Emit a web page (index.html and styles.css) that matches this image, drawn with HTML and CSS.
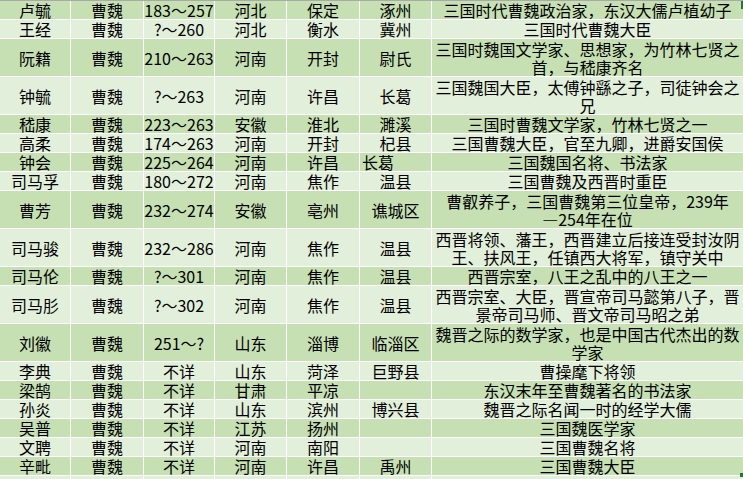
FILE: index.html
```html
<!DOCTYPE html>
<html lang="zh-CN">
<head>
<meta charset="utf-8">
<title>曹魏人物表</title>
<link rel="stylesheet" href="styles.css">
</head>
<body>
<div class="sheet">
  <div class="row dark s"><div>卢毓</div><div>曹魏</div><div>183～257</div><div>河北</div><div>保定</div><div>涿州</div><div>三国时代曹魏政治家，东汉大儒卢植幼子</div></div>
  <div class="row light s"><div>王经</div><div>曹魏</div><div>?～260</div><div>河北</div><div>衡水</div><div>冀州</div><div>三国时代曹魏大臣</div></div>
  <div class="row dark d"><div>阮籍</div><div>曹魏</div><div>210～263</div><div>河南</div><div>开封</div><div>尉氏</div><div>三国时魏国文学家、思想家，为竹林七贤之<br>首，与嵇康齐名</div></div>
  <div class="row light d"><div>钟毓</div><div>曹魏</div><div>?～263</div><div>河南</div><div>许昌</div><div>长葛</div><div>三国魏国大臣，太傅钟繇之子，司徒钟会之<br>兄</div></div>
  <div class="row dark s"><div>嵇康</div><div>曹魏</div><div>223～263</div><div>安徽</div><div>淮北</div><div>濉溪</div><div>三国时曹魏文学家，竹林七贤之一</div></div>
  <div class="row light s"><div>高柔</div><div>曹魏</div><div>174～263</div><div>河南</div><div>开封</div><div>杞县</div><div>三国曹魏大臣，官至九卿，进爵安国侯</div></div>
  <div class="row dark s"><div>钟会</div><div>曹魏</div><div>225～264</div><div>河南</div><div>许昌</div><div class="left">长葛</div><div>三国魏国名将、书法家</div></div>
  <div class="row light s"><div>司马孚</div><div>曹魏</div><div>180～272</div><div>河南</div><div>焦作</div><div>温县</div><div>三国曹魏及西晋时重臣</div></div>
  <div class="row dark d"><div>曹芳</div><div>曹魏</div><div>232～274</div><div>安徽</div><div>亳州</div><div>谯城区</div><div>曹叡养子，三国曹魏第三位皇帝，239年<br>—254年在位</div></div>
  <div class="row light d"><div>司马骏</div><div>曹魏</div><div>232～286</div><div>河南</div><div>焦作</div><div>温县</div><div>西晋将领、藩王，西晋建立后接连受封汝阴<br>王、扶风王，任镇西大将军，镇守关中</div></div>
  <div class="row dark s"><div>司马伦</div><div>曹魏</div><div>?～301</div><div>河南</div><div>焦作</div><div>温县</div><div>西晋宗室，八王之乱中的八王之一</div></div>
  <div class="row light d"><div>司马肜</div><div>曹魏</div><div>?～302</div><div>河南</div><div>焦作</div><div>温县</div><div>西晋宗室、大臣，晋宣帝司马懿第八子，晋<br>景帝司马师、晋文帝司马昭之弟</div></div>
  <div class="row dark d"><div>刘徽</div><div>曹魏</div><div>251～?</div><div>山东</div><div>淄博</div><div>临淄区</div><div>魏晋之际的数学家，也是中国古代杰出的数<br>学家</div></div>
  <div class="row light s"><div>李典</div><div>曹魏</div><div>不详</div><div>山东</div><div>菏泽</div><div>巨野县</div><div>曹操麾下将领</div></div>
  <div class="row dark s"><div>梁鹄</div><div>曹魏</div><div>不详</div><div>甘肃</div><div>平凉</div><div></div><div>东汉末年至曹魏著名的书法家</div></div>
  <div class="row light s"><div>孙炎</div><div>曹魏</div><div>不详</div><div>山东</div><div>滨州</div><div>博兴县</div><div>魏晋之际名闻一时的经学大儒</div></div>
  <div class="row dark s"><div>吴普</div><div>曹魏</div><div>不详</div><div>江苏</div><div>扬州</div><div></div><div>三国魏医学家</div></div>
  <div class="row light s"><div>文聘</div><div>曹魏</div><div>不详</div><div>河南</div><div>南阳</div><div></div><div>三国曹魏名将</div></div>
  <div class="row dark s"><div>辛毗</div><div>曹魏</div><div>不详</div><div>河南</div><div>许昌</div><div>禹州</div><div>三国曹魏大臣</div></div>
  <div class="row light s"><div></div><div></div><div></div><div></div><div></div><div></div><div></div></div>
  <span class="sel-top"></span>
  <span class="sel-handle"></span>
</div>
</body>
</html>
```

FILE: styles.css
```css
html, body {
  margin: 0;
  padding: 0;
  background: #ffffff;
}

.sheet {
  position: relative;
  width: 743px;
  height: 479px;
  overflow: hidden;
  border-top: 1px solid #a9a9a9;
  background: #ffffff;
  display: flex;
  flex-direction: column;
  gap: 1px;
  font-family: "Noto Sans CJK SC", "Noto Sans", sans-serif;
  font-size: 16px;
  color: #000000;
}

.row {
  display: grid;
  grid-template-columns: 70px 72px 70px 71px 72px 71px 311px;
  column-gap: 1px;
  flex: none;
}

.row.s { height: 18px; }
.row.d { height: 37px; }

.row > div {
  display: flex;
  align-items: center;
  justify-content: center;
  text-align: center;
  line-height: 18px;
  white-space: nowrap;
}

.row > div.left {
  justify-content: flex-start;
  padding-left: 2px;
}

.dark > div { background: #c6e0b4; }
.light > div { background: #e2efda; }

.sel-top {
  position: absolute;
  right: 0;
  top: 0;
  width: 2px;
  height: 8px;
  background: #217346;
}

.sel-handle {
  position: absolute;
  right: 0;
  top: 472px;
  width: 3px;
  height: 4px;
  background: #217346;
}
```
